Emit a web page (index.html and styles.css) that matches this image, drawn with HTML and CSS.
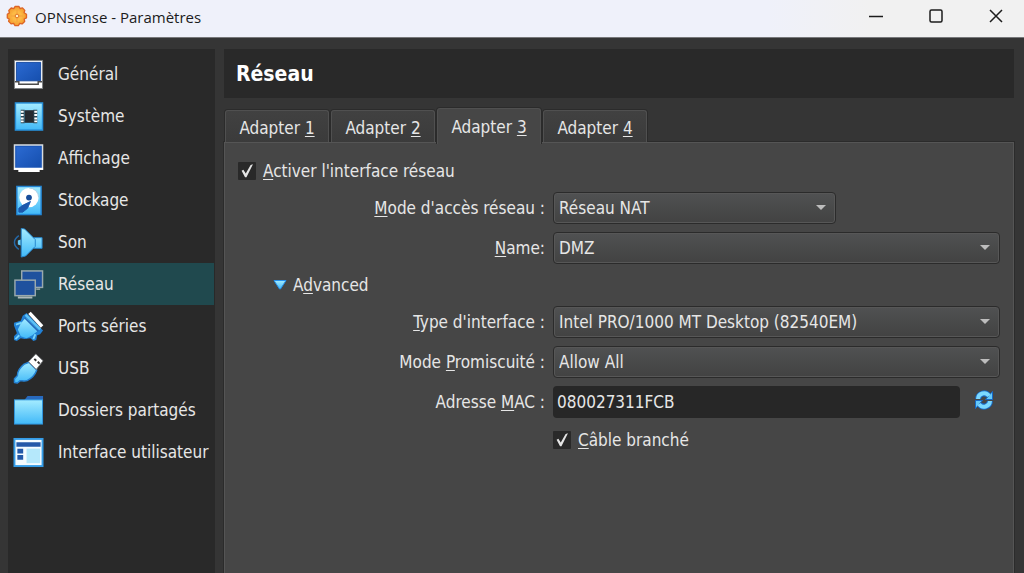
FILE: index.html
```
<!DOCTYPE html>
<html lang="fr">
<head>
    <meta charset="UTF-8">
    <meta name="viewport" content="width=device-width, initial-scale=1.0">
    <title>OPNsense - Paramètres</title>
    <link rel="stylesheet" href="styles.css">
</head>
<body>
    <!-- shared gradients for the icons -->
    <svg class="defs" width="0" height="0" aria-hidden="true">
        <defs>
            <linearGradient id="sky" x1="0" y1="0" x2="0" y2="1">
                <stop offset="0" stop-color="#a5ecff"/>
                <stop offset="1" stop-color="#41b9f8"/>
            </linearGradient>
            <linearGradient id="screen" x1="0" y1="0" x2="1" y2="1">
                <stop offset="0" stop-color="#2b6ad2"/>
                <stop offset="1" stop-color="#164fae"/>
            </linearGradient>
            <radialGradient id="gear">
                <stop offset="0" stop-color="#ffd45c"/>
                <stop offset="1" stop-color="#f59a2c"/>
            </radialGradient>
        </defs>
    </svg>

    <header class="titlebar">
        <svg class="app-icon" viewBox="0 0 22 22" aria-hidden="true">
            <path d="M9 1.500h4l1 2 2.500-.6 2.300 2.500-.7 2.300 2.400 1.500v3.600l-2.300 1.200.5 2.500-2.600 2.400-2.300-.6-1.500 2.300H9l-1.400-2.200-2.500.5-2.500-2.500.6-2.400L1.300 13V9.300l2.100-1.400-.6-2.500L5.200 3l2.600.6z" fill="url(#gear)" stroke="#dd6425" stroke-width="1.300" stroke-linejoin="round"/>
            <circle cx="11" cy="11" r="5" fill="#fdb945"/>
            <path d="M11 5v4M11 13v4M5 11h4M13 11h4" stroke="#f5a03c" stroke-width="1"/>
            <circle cx="11" cy="11" r="1.800" fill="#fff0c0" stroke="#e0752a"/>
        </svg>
        <h1>OPNsense - Paramètres</h1>
        <div class="window-buttons">
            <button type="button" aria-label="Réduire">
                <svg viewBox="0 0 16 16"><path d="M1 8.500h14"/></svg>
            </button>
            <button type="button" aria-label="Agrandir">
                <svg viewBox="0 0 16 16"><rect x="2" y="2" width="12" height="12" rx="1.500"/></svg>
            </button>
            <button type="button" aria-label="Fermer">
                <svg viewBox="0 0 16 16"><path d="M2 2l12 12M14 2L2 14"/></svg>
            </button>
        </div>
    </header>

    <div class="window">
        <nav class="sidebar">
            <a href="#general">
                <svg viewBox="0 0 32 32"><path d="M1.500 1.500h29v29h-29z" fill="#fff" stroke="#7d8082"/><path d="M3.500 3.500h25v19h-25z" fill="url(#screen)" stroke="#174aa0"/><path d="M2 23.500h4v2.500h20v-2.500h4" fill="none" stroke="#4b4b4b" stroke-width="1.500"/></svg>
                Général
            </a>
            <a href="#systeme">
                <svg viewBox="0 0 32 32"><rect x="2.500" y="2" width="28" height="28" fill="url(#sky)" stroke="#278fd8" stroke-width="1.500"/><path d="M12 9.500h10v13H12z" fill="#252a30"/><path d="M8 9h4v14H8zM21 9h4v14h-4z" fill="#294452"/><path d="M8 11h3M8 14.500h3M8 18h3M8 21h3M22 11h3M22 14.500h3M22 18h3M22 21h3" stroke="#fff" stroke-width="2"/></svg>
                Système
            </a>
            <a href="#affichage">
                <svg viewBox="0 0 32 32"><path d="M1.500 2h29v25h-29z" fill="#1b56b8" stroke="#d9dde0" stroke-width="1.500"/><path d="M3.500 4h25v21h-25z" fill="url(#screen)"/><path d="M1 25.500h30v2h-3.500V30h-22v-2.500H1z" fill="#fff"/></svg>
                Affichage
            </a>
            <a href="#stockage">
                <svg viewBox="0 0 32 32"><rect x="4" y="1.500" width="25" height="29" fill="url(#sky)" stroke="#2486d5" stroke-width="1.500"/><circle cx="16.500" cy="13" r="10" fill="#fff"/><path d="M16.500 3a10 10 0 0 1 10 10" fill="none" stroke="#a9cfe8"/><circle cx="16.500" cy="13" r="3" fill="#174d9b"/><path d="M18 17l-3 7-5 4H6v-4l4-3z" fill="#1c59ad" stroke="#1c59ad" stroke-linejoin="round"/></svg>
                Stockage
            </a>
            <a href="#son">
                <svg viewBox="0 0 32 32"><path d="M6 9c-6 4-6 10 0 14" fill="none" stroke="#2569a8" stroke-width="1.500"/><path d="M8 13v6l-3-1v-4z" fill="#67c9f7"/><path d="M8.500 1.500l3.500.5 9 9h9v11h-9l-8 8-4.500 1z" fill="url(#sky)" stroke="#2586cc"/><path d="M21 11l2 2v7l-2 2" fill="none" stroke="#2586cc"/></svg>
                Son
            </a>
            <a href="#reseau" class="active" aria-current="page">
                <svg viewBox="0 0 32 32"><g fill="#1f519e" stroke="#9aa9ad" stroke-width="1.500"><rect x="9" y="2" width="21.500" height="17"/><rect x="2" y="11.500" width="21" height="16"/></g><path d="M5 28.500h15v2H5zM24 20h4v1.500h-4z" fill="#aeb9bb"/></svg>
                Réseau
            </a>
            <a href="#ports">
                <svg viewBox="0 0 32 32"><path d="M1 30v-4l3-3-1-3-2-5V12l7-2 2-5 4-3 17 18-3 4-3 1-1 5-3 1-3-3-6 1-4-1-4 3z" fill="#2181d6"/><path d="M5 19l3-6 5-6 13 13-6 5-6 3-6-2z" fill="url(#sky)"/><path d="M3 14l6-2M21 29l2-5M2.500 29l4-4" stroke="#77d5fc" stroke-width="2"/><path d="M12 7l14 14" stroke="#246ab9" stroke-width="1.500"/><path d="M13 4l15 15" stroke="#5ec2f5" stroke-width="2.500"/><path d="M17 2l13 14" stroke="#fff" stroke-width="3.500"/></svg>
                Ports séries
            </a>
            <a href="#usb">
                <svg viewBox="0 0 32 32"><path d="M1.500 30.500v-4l3-3c0-5 2-8 7-12l5-2 8 8c-2 6-6 9-10 11-3 1-5 0-7 0l-3 2.500z" fill="url(#sky)" stroke="#2481d2" stroke-width="1.500" stroke-linejoin="round"/><path d="M16 9l7.500-8 7.500 7-7 9z" fill="#fff" stroke="#77797c"/><path d="M22 6l2 2M25.500 9l2 2" stroke="#303030" stroke-width="2"/></svg>
                USB
            </a>
            <a href="#dossiers">
                <svg viewBox="0 0 32 32"><path d="M12 5l3-4h16v8H12z" fill="#2869bd"/><rect x="1.500" y="5" width="29" height="25" fill="url(#sky)" stroke="#2f96df"/></svg>
                Dossiers partagés
            </a>
            <a href="#interface">
                <svg viewBox="0 0 32 32"><rect x="1.500" y="2" width="29" height="28" fill="#f5fcff" stroke="#349ce7" stroke-width="2"/><path d="M3.500 5.500h25V10h-25zM4.500 12h6v5h-6zM4.500 18.500h6v5h-6z" fill="#2459a9"/><rect x="14" y="12" width="14" height="15" fill="#b5e8fb"/></svg>
                Interface utilisateur
            </a>
        </nav>

        <main class="content">
            <h2>Réseau</h2>
            <div class="tabs" role="tablist">
                <button type="button" role="tab" aria-selected="false">Adapter <u>1</u></button>
                <button type="button" role="tab" aria-selected="false">Adapter <u>2</u></button>
                <button type="button" role="tab" aria-selected="true">Adapter <u>3</u></button>
                <button type="button" role="tab" aria-selected="false">Adapter <u>4</u></button>
            </div>

            <form class="pane" role="tabpanel">
                <label class="check">
                    <input type="checkbox" checked>
                    <span><u>A</u>ctiver l'interface réseau</span>
                </label>

                <div class="fields">
                    <label for="mode"><span><u>M</u>ode d'accès réseau :</span></label>
                    <div class="select short">
                        <select id="mode"><option>Réseau NAT</option></select>
                    </div>

                    <label for="name"><span><u>N</u>ame:</span></label>
                    <div class="select">
                        <select id="name"><option>DMZ</option></select>
                    </div>

                    <button type="button" class="advanced" aria-expanded="true">
                        <svg viewBox="0 0 14 12"><path d="M1 1.500h12L7.500 10h-1z" fill="url(#sky)" stroke="#2591ee"/></svg>
                        <span>A<u>d</u>vanced</span>
                    </button>

                    <label for="type"><span><u>T</u>ype d'interface :</span></label>
                    <div class="select">
                        <select id="type"><option>Intel PRO/1000 MT Desktop (82540EM)</option></select>
                    </div>

                    <label for="promisc"><span>Mode <u>P</u>romiscuité :</span></label>
                    <div class="select">
                        <select id="promisc"><option>Allow All</option></select>
                    </div>

                    <label for="mac"><span>Adresse <u>M</u>AC :</span></label>
                    <div class="mac">
                        <input type="text" id="mac" value="080027311FCB">
                        <button type="button" aria-label="Générer une nouvelle adresse MAC">
                            <svg viewBox="0 0 20 20">
                                <g fill="none" stroke="#1769c5" stroke-width="6"><path d="M4 9a6 6 0 0 1 10.500-3.500M16 11a6 6 0 0 1-10.500 3.500"/></g>
                                <path d="M18.500 1.500v8h-7zM1.500 18.500v-8h7z" fill="#64c9fa" stroke="#1769c5"/>
                                <g fill="none" stroke="#7bd8ff" stroke-width="4"><path d="M4 9a6 6 0 0 1 11-3M16 11a6 6 0 0 1-11 3"/></g>
                            </svg>
                        </button>
                    </div>

                    <label class="check cable">
                        <input type="checkbox" checked>
                        <span><u>C</u>âble branché</span>
                    </label>
                </div>
            </form>
        </main>
    </div>
</body>
</html>
```

FILE: styles.css
```
* { margin: 0; padding: 0; box-sizing: border-box; }
body { display: flex; flex-direction: column; min-height: 100vh; background: #353535; color: #e6e6e6; font-family: "DejaVu Sans Condensed", Tahoma, sans-serif; font-size: 17px; line-height: 20px; }
button, input, select { font: inherit; color: inherit; border: none; background: none; }
u { text-underline-offset: 2px; text-decoration-thickness: 1px; }
svg { display: block; flex: none; }
.defs { position: absolute; }

.titlebar { display: flex; align-items: center; height: 38px; padding-left: 6px; background: linear-gradient(90deg, #eff1fa 75%, #f1f1f1 85%); border-bottom: 1px solid #77787a; color: #1c1c1c; }
.app-icon { width: 22px; height: 22px; margin-bottom: 5px; }
.titlebar h1 { flex: 1; margin: 0 0 4px 7px; font-family: "Open Sans", "Segoe UI", sans-serif; font-size: 15px; font-weight: 400; }
.window-buttons { display: flex; margin-bottom: 5px; }
.window-buttons button { display: flex; justify-content: center; align-items: center; width: 60px; height: 32px; padding-left: 3px; }
.window-buttons svg { width: 16px; height: 16px; fill: none; stroke: #1c1c1c; stroke-width: 1.5; }

.window { flex: 1; display: flex; gap: 9px; padding: 11px 10px 0 8px; }
.sidebar { flex: none; width: 207px; padding: 4px 1px; background: #292929; }
.sidebar a { display: flex; align-items: center; gap: 14px; height: 42px; padding-left: 4px; color: inherit; text-decoration: none; white-space: nowrap; }
.sidebar svg { width: 31px; height: 31px; }
.sidebar .active { background: #20494e; }

.content { flex: 1; display: flex; flex-direction: column; min-width: 0; }
h2 { height: 49px; padding: 0 12px; background: #292929; color: #fff; font-size: 21px; line-height: 51px; }
.tabs { display: flex; align-items: flex-end; gap: 2px; height: 44px; padding-left: 1px; }
.tabs button { width: 104px; height: 32px; padding-top: 2px; background: linear-gradient(#414141, #3b3b3b); border: 1px solid #505050; border-bottom: none; border-radius: 3px 3px 0 0; box-shadow: 0 0 0 1px #2b2b2b; clip-path: inset(-1px -1px 0 -1px); }
/* the open tab covers the top edge of the pane */
.tabs [aria-selected="true"] { position: relative; height: 36px; margin-bottom: -2px; padding-bottom: 2px; background: #464646; }
.pane { flex: 1; padding: 18px 13px 20px 13px; background: #464646; border: 1px solid #555; border-bottom: none; box-shadow: 0 0 0 1px #2b2b2b; }

.check { display: flex; align-items: center; gap: 7px; }
.check input { appearance: none; flex: none; width: 18px; height: 18px; background: #292929; border-radius: 1px; }
.check input:checked::after { content: ""; display: block; width: 18px; height: 18px; background: #e4e4e4; clip-path: polygon(20% 48%, 30% 43%, 43% 64%, 70% 16%, 83% 12%, 47% 85%, 39% 85%); }

.fields { display: grid; grid-template-columns: 307px minmax(0, 1fr); column-gap: 8px; row-gap: 8px; align-items: center; margin-top: 11px; }
.fields > label:not(.check) { text-align: right; }
.select { position: relative; }
.select.short { max-width: 283px; }
.select::after { content: ""; position: absolute; top: 13px; right: 10px; border: 5px solid transparent; border-top-color: #bdbdbd; border-bottom: none; pointer-events: none; }
.select select { appearance: none; display: block; width: 100%; height: 32px; padding: 0 28px 0 5px; background: linear-gradient(#505152, #424242); border: 1px solid #2b2b2b; border-radius: 4px; box-shadow: inset 0 0 0 1px #575757; }
.advanced { grid-column: 1 / -1; display: flex; align-items: center; gap: 6px; height: 26px; padding-left: 35px; }
.advanced svg { width: 14px; height: 12px; }
.mac { display: flex; align-items: center; gap: 14px; padding-right: 6px; }
.mac input { flex: 1; min-width: 0; height: 32px; padding: 0 4px; background: #272727; border-radius: 4px; }
.mac button { padding-bottom: 4px; }
.mac svg { width: 20px; height: 20px; }
.cable { grid-column: 2; height: 28px; }
```
